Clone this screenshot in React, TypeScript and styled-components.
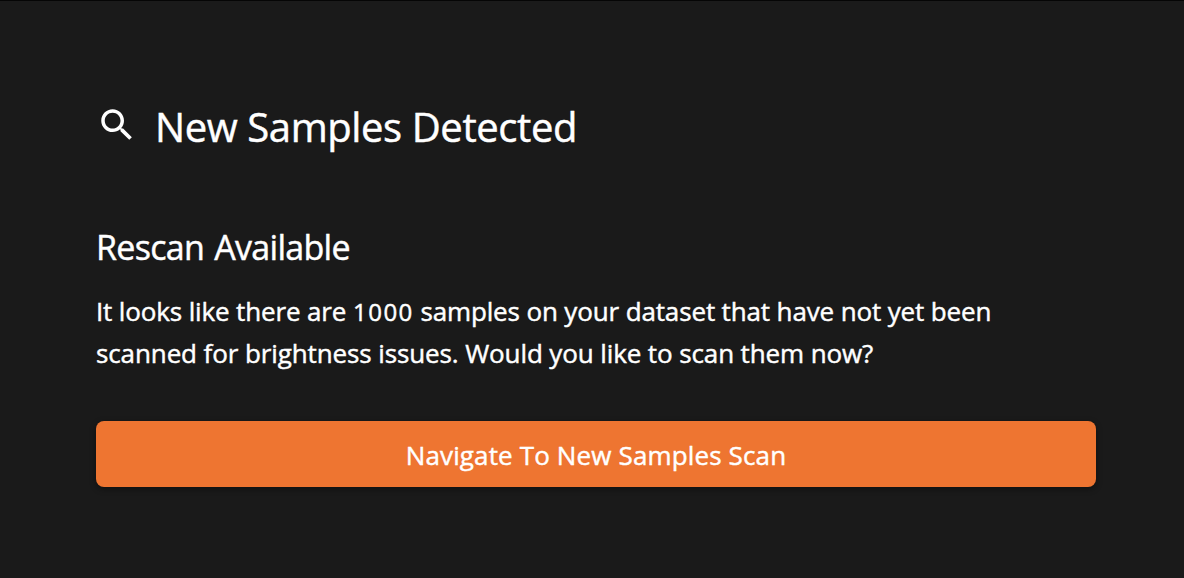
import React from "react";
import styled, { createGlobalStyle } from "styled-components";

const GlobalStyle = createGlobalStyle`
  * { box-sizing: border-box; }
  body { margin: 0; background: #1a1a1a; }
`;

const Panel = styled.main`
  height: 578px;
  padding: 95px 88px 0 96px;
  background: #1a1a1a;
  border-top: 1px solid #050505;
  color: #fff;
  font-family: "Open Sans", "Noto Sans", sans-serif;
  -webkit-text-stroke: 0.45px #fff;
`;

const Header = styled.header`
  display: flex;
  align-items: center;
  height: 64px;
`;

const SearchIcon = styled.svg`
  width: 42px;
  height: 42px;
  margin: -6px 17px 0 0;
  fill: #fff;
`;

const Title = styled.h1`
  margin: -2px 0 0;
  font-size: 40px;
  line-height: 64px;
  font-weight: 400;
  letter-spacing: -0.41px;
`;

const Subtitle = styled.h2`
  margin: 63px 0 0;
  font-size: 34px;
  line-height: 48px;
  font-weight: 400;
  letter-spacing: -0.7px;
  word-spacing: 2px;
`;

const Message = styled.p`
  margin: 19px 0 0;
  font-size: 26px;
  line-height: 42px;
  letter-spacing: -0.11px;
`;

const Line = styled.span<{ $tracking?: number }>`
  display: block;
  white-space: nowrap;
  letter-spacing: ${(p) => p.$tracking ?? -0.11}px;
`;

const Count = styled.span`
  font-size: 24px;
  line-height: 1;
  letter-spacing: 1.5px;
`;

const Button = styled.button`
  display: block;
  width: 1000px;
  height: 66px;
  margin-top: 47px;
  padding: 2px 0 0;
  border: 0;
  border-radius: 8px;
  background: #ee7531;
  color: #fff;
  font: 400 26px/64px "Open Sans", "Noto Sans", sans-serif;
  letter-spacing: 0.14px;
  -webkit-text-stroke: 0.45px #fff;
  box-shadow: 0 2px 6px rgba(0, 0, 0, 0.4);
`;

export default function App() {
  return (
    <Panel>
      <GlobalStyle />
      <Header>
        <SearchIcon viewBox="0 0 24 24">
          <path d="M15.5 14h-.79l-.28-.27C15.41 12.59 16 11.11 16 9.5 16 5.91 13.09 3 9.5 3S3 5.91 3 9.5 5.91 16 9.5 16c1.61 0 3.09-.59 4.23-1.57l.27.28v.79l5 4.99L20.49 19l-4.99-5zm-6 0C7.01 14 5 11.99 5 9.5S7.01 5 9.5 5 14 7.01 14 9.5 11.99 14 9.5 14z" />
        </SearchIcon>
        <Title>New Samples Detected</Title>
      </Header>
      <Subtitle>Rescan Available</Subtitle>
      <Message>
        <Line $tracking={-0.14}>
          It looks like there are <Count>1000</Count> samples on your dataset that have not yet been
        </Line>
        <Line>scanned for brightness issues. Would you like to scan them now?</Line>
      </Message>
      <Button>Navigate To New Samples Scan</Button>
    </Panel>
  );
}
